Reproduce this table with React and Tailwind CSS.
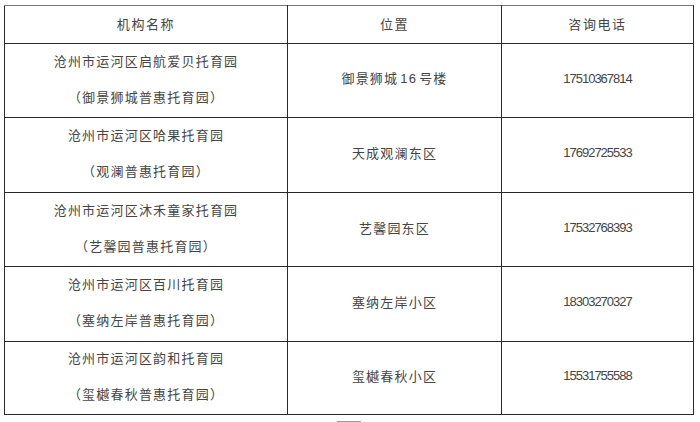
import React from 'react';

const rows = [
  { name: '沧州市运河区启航爱贝托育园', alias: '（御景狮城普惠托育园）', place: ['御景狮城', '16', '号楼'], phone: '17510367814', h: 'h-[74px]' },
  { name: '沧州市运河区哈果托育园', alias: '（观澜普惠托育园）', place: ['天成观澜东区'], phone: '17692725533', h: 'h-[75px]' },
  { name: '沧州市运河区沐禾童家托育园', alias: '（艺馨园普惠托育园）', place: ['艺馨园东区'], phone: '17532768393', h: 'h-[74px]' },
  { name: '沧州市运河区百川托育园', alias: '（塞纳左岸普惠托育园）', place: ['塞纳左岸小区'], phone: '18303270327', h: 'h-[75px]' },
  { name: '沧州市运河区韵和托育园', alias: '（玺樾春秋普惠托育园）', place: ['玺樾春秋小区'], phone: '15531755588', h: 'h-[73px]' },
];

const cjk = { fontFamily: '"Noto Sans CJK SC", "Noto Sans", sans-serif' };
const latin = { fontFamily: '"Liberation Sans", Arial, sans-serif' };

export default function App() {
  return (
    <div className="w-[700px] h-[422px] bg-white pt-[5px] pl-[4px] overflow-hidden text-[#454545]" style={cjk}>
      <table className="border-collapse table-fixed w-[689px]">
        <colgroup>
          <col className="w-[283px]" />
          <col className="w-[214px]" />
          <col className="w-[192px]" />
        </colgroup>
        <thead>
          <tr className="h-[38px]">
            <th className="border border-[#2a2a2a] border-t-[#777] font-normal text-[13px] tracking-[1.6px] p-0">
              <div className="-translate-y-[1px]">机构名称</div>
            </th>
            <th className="border border-[#2a2a2a] border-t-[#777] font-normal text-[13px] tracking-[1.6px] p-0">
              <div className="-translate-y-[1px]">位置</div>
            </th>
            <th className="border border-[#2a2a2a] border-t-[#777] font-normal text-[13px] tracking-[1.6px] p-0">
              <div className="-translate-y-[1px]">咨询电话</div>
            </th>
          </tr>
        </thead>
        <tbody>
          {rows.map((r) => (
            <tr key={r.phone} className={r.h}>
              <td className="border border-[#2a2a2a] text-center text-[13px] tracking-[1.2px] leading-[36px] p-0">
                <div className="-translate-y-[2px]">
                  <div>{r.name}</div>
                  <div>{r.alias}</div>
                </div>
              </td>
              <td className="border border-[#2a2a2a] text-center text-[13px] tracking-[1.2px] p-0">
                <div className="-translate-y-[2px]">
                  {r.place.length === 1 ? (
                    r.place[0]
                  ) : (
                    <>
                      {r.place[0]}
                      <span className="mx-[2px]" style={latin}>{r.place[1]}</span>
                      {r.place[2]}
                    </>
                  )}
                </div>
              </td>
              <td className="border border-[#2a2a2a] text-center text-[13px] tracking-[-1px] p-0" style={latin}>
                <div className="-translate-y-[2px]">{r.phone}</div>
              </td>
            </tr>
          ))}
        </tbody>
      </table>
      <div className="mt-[6px] ml-[333px] w-[24px] h-[2px] bg-[#9a9a9a]" />
    </div>
  );
}
